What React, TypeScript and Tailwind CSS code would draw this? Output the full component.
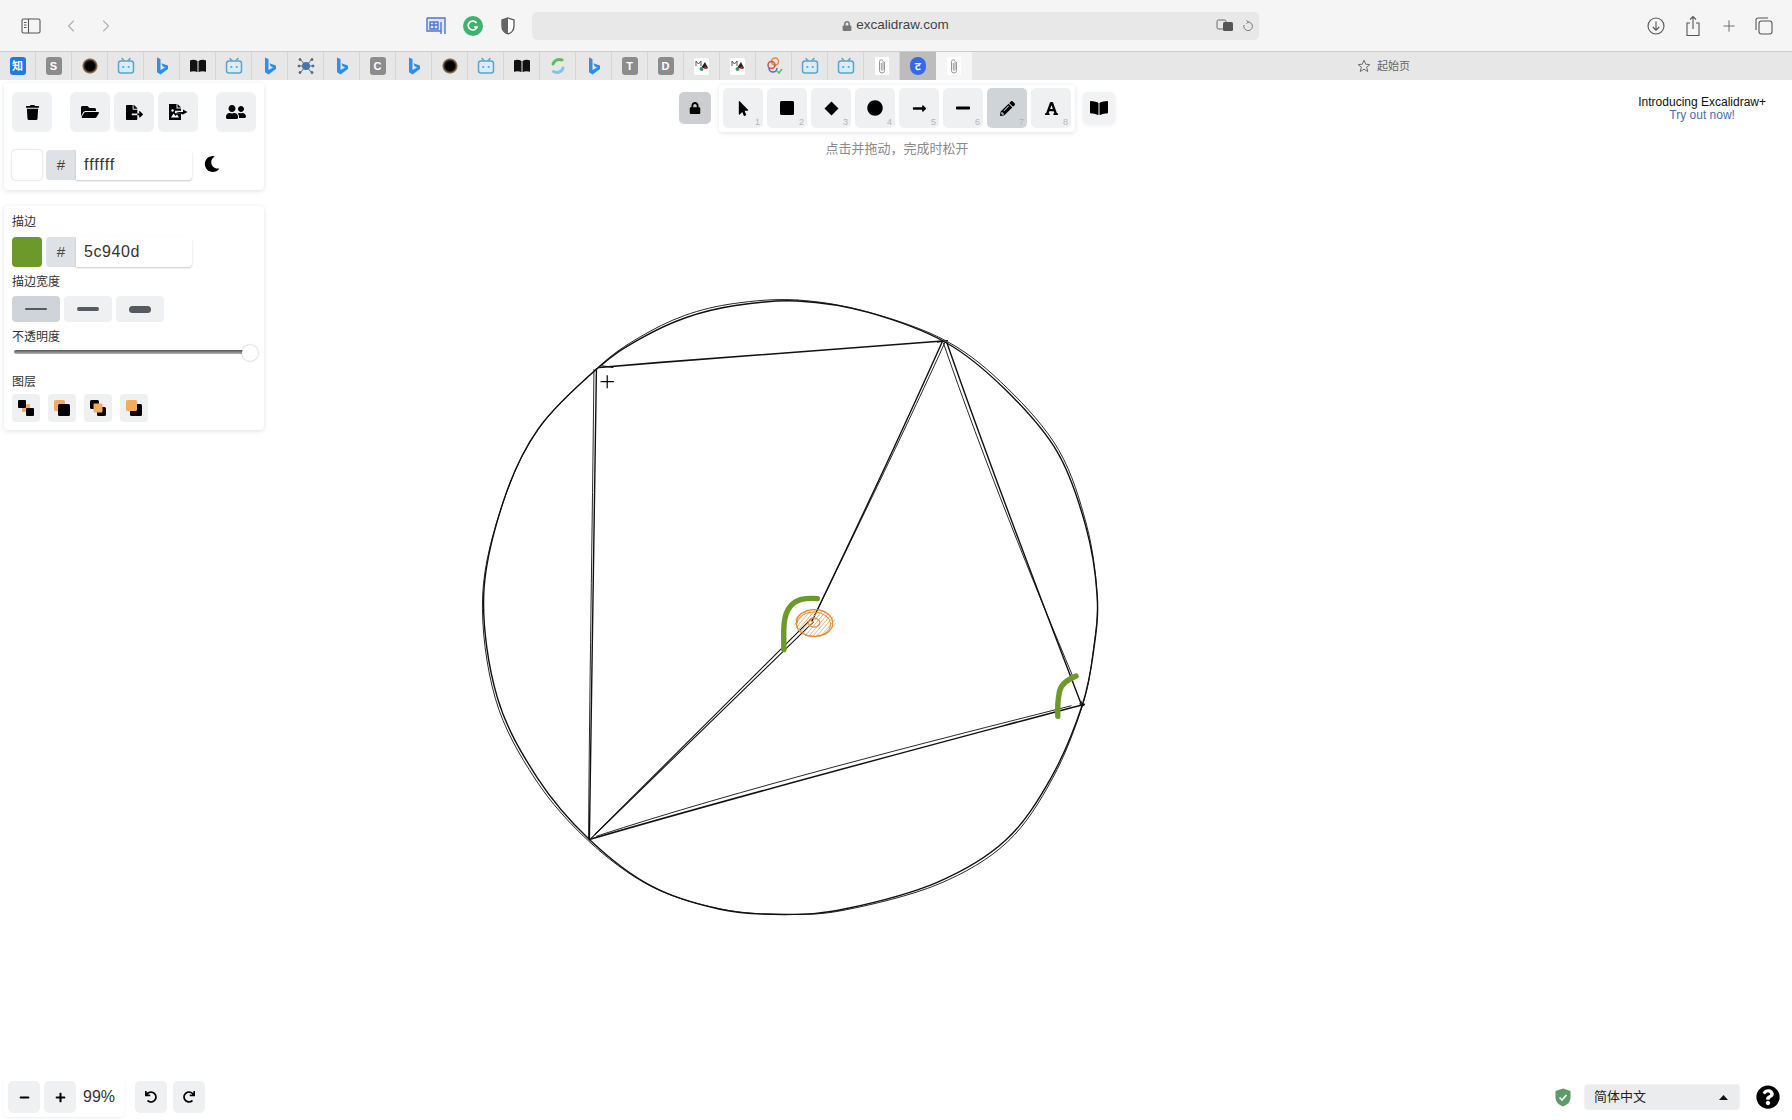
import React from "react";
import {
  FaTrash, FaFolderOpen, FaFileExport, FaUserFriends, FaMoon, FaLock, FaMousePointer, FaSquare, FaCircle,
  FaLongArrowAltRight, FaMinus, FaPencilAlt, FaFont, FaBookOpen, FaPlus, FaUndo, FaRedo, FaQuestionCircle,
} from "react-icons/fa";
import { ChevronLeft, ChevronRight, Plus } from "lucide-react";

type P = [number, number];
const smooth = (pts: P[]) => {
  const n = pts.length;
  let d = `M${pts[0][0]},${pts[0][1]}`;
  for (let i = 0; i < n; i++) {
    const p0 = pts[(i - 1 + n) % n], p1 = pts[i], p2 = pts[(i + 1) % n], p3 = pts[(i + 2) % n];
    d += `C${p1[0] + (p2[0] - p0[0]) / 6},${p1[1] + (p2[1] - p0[1]) / 6} ${p2[0] - (p3[0] - p1[0]) / 6},${p2[1] - (p3[1] - p1[1]) / 6} ${p2[0]},${p2[1]}`;
  }
  return d;
};
const circlePts: P[] = [
  [790, 27], [640, 38], [520, 68], [410, 120], [310, 190], [165, 340], [80, 520], [33, 750], [66, 1000], [162, 1196], [288, 1348],
  [437, 1462], [603, 1519], [760, 1532], [906, 1518], [1127, 1453], [1292, 1350], [1402, 1196], [1477, 1018], [1505, 880], [1513, 750],
  [1485, 578], [1416, 396], [1292, 245], [1150, 130], [961, 55],
];
const circle2 = circlePts.map((p, i): P => {
  const dx = p[0] - 770, dy = p[1] - 780, l = Math.hypot(dx, dy);
  const k = 1 + (3.5 * Math.sin(i * 0.9) + 2.5) / l;
  return [770 + dx * k, 780 + dy * k];
});
const Line = ({ d, w = 1 }: { d: string; w?: number }) => (
  <path d={d} fill="none" stroke="#111" strokeWidth={w} strokeLinecap="round" vectorEffect="non-scaling-stroke" />
);
const hatch = Array.from({ length: 16 }, (_, i) => {
  const t = -60 + i * 8;
  const c = 830 + t * 1.2, e = 817;
  return `M${c - 30},${e + 36}L${c + 30},${e - 36}`;
}).join("");

function Drawing() {
  return (
    <svg className="absolute left-[470px] top-[210px] w-[650px] h-[640px]" viewBox="0 0 1568 1570" preserveAspectRatio="none">
      <defs>
        <clipPath id="blob"><ellipse cx={832} cy={817} rx={50} ry={35} /></clipPath>
      </defs>
      <Line d={smooth(circlePts)} w={1.4} />
      <Line d={smooth(circle2)} w={0.9} />
      <Line d="M312,190C600,165 900,145 1140,125" w={1.6} />
      <Line d="M318,186L345,190M1128,128L1152,124" w={1.1} />
      <Line d="M305,193C300,600 292,1000 288,1348" w={1.4} />
      <Line d="M299,195C295,600 288,1000 286,1345" w={0.9} />
      <Line d="M302,1335L825,805" w={1.1} />
      <Line d="M292,1345L828,815" w={1.1} />
      <Line d="M825,812C930,590 1050,330 1140,125" w={1.4} />
      <Line d="M838,785C950,550 1060,320 1146,128" w={0.9} />
      <Line d="M1150,128C1250,420 1370,740 1476,1020" w={1.4} />
      <Line d="M1142,130C1240,420 1360,720 1455,950" w={0.9} />
      <Line d="M288,1348C650,1240 1100,1120 1482,1016" w={1.5} />
      <Line d="M305,1340C650,1225 1100,1110 1450,1020" w={0.9} />
      <path d="M1470,1015L1482,1020M1474,1008L1476,1024" stroke="#111" strokeWidth={1} vectorEffect="non-scaling-stroke" />
      <path d="M838,757C810,755 785,757 770,780C752,805 758,850 757,882" fill="none" stroke="#6e9a2b" strokeWidth={5.4} strokeLinecap="round" vectorEffect="non-scaling-stroke" />
      <path d="M1462,947C1445,955 1428,962 1422,985C1418,1005 1417,1025 1418,1046" fill="none" stroke="#6e9a2b" strokeWidth={5.4} strokeLinecap="round" vectorEffect="non-scaling-stroke" />
      <path d={hatch} clipPath="url(#blob)" fill="none" stroke="#f0a868" strokeWidth={0.9} vectorEffect="non-scaling-stroke" />
      <ellipse cx={831} cy={817} rx={44} ry={33} fill="none" stroke="#e58a38" strokeWidth={1.2} vectorEffect="non-scaling-stroke" />
      <ellipse cx={829} cy={820} rx={41} ry={30} fill="none" stroke="#e58a38" strokeWidth={1} vectorEffect="non-scaling-stroke" />
      <ellipse cx={830} cy={816} rx={14} ry={11} fill="none" stroke="#e58a38" strokeWidth={1.1} vectorEffect="non-scaling-stroke" />
      <path d="M315,225H347M331,209V241" stroke="#000" strokeWidth={1.2} vectorEffect="non-scaling-stroke" />
    </svg>
  );
}

const SidebarIcon = () => (
  <svg width="20" height="16" viewBox="0 0 20 16" fill="none" stroke="#555" strokeWidth="1.1">
    <rect x="1" y="1" width="18" height="14" rx="1.5" />
    <path d="M7.5 1V15" />
    <path d="M3 4.5H5.5M3 7H5.5M3 9.5H5.5" strokeWidth="1" />
  </svg>
);
const Bing = () => (
  <svg width="14" height="20" viewBox="0 0 14 20">
    <path d="M2 1.5L5.5 3V14L10 11.5L7.6 10.3L6.4 7.2L13 9.6V13L5.5 18.5L2 16.3Z" fill="#2f8fe8" />
  </svg>
);
const Bili = () => (
  <svg width="18" height="18" viewBox="0 0 18 18" fill="none">
    <path d="M5 1.5L7.2 4M13 1.5L10.8 4" stroke="#5aa5cf" strokeWidth="1.5" strokeLinecap="round" />
    <rect x="1.5" y="4" width="15" height="12" rx="2.5" fill="#d9edf7" stroke="#5aa5cf" strokeWidth="1.5" />
    <circle cx="6.3" cy="10" r="1.1" fill="#5aa5cf" />
    <circle cx="11.7" cy="10" r="1.1" fill="#5aa5cf" />
  </svg>
);
const Hole = () => (
  <div className="w-[16px] h-[16px] rounded-full bg-[radial-gradient(circle_closest-side,#000_55%,#33303c_72%,#b98650_92%,#e8e7e8_100%)]" />
);
const Book = () => (
  <svg width="18" height="14" viewBox="0 0 18 14">
    <path d="M1 1.5C3.5 .5 6 .7 8.5 2V13C6 12 3.5 12 1 12.7ZM17 1.5C14.5 .5 12 .7 9.5 2V13C12 12 14.5 12 17 12.7Z" fill="#111" />
  </svg>
);
const Letter = ({ c }: { c: string }) => (
  <div className="w-4 h-[18px] rounded-[3px] bg-[#8c8c8e] text-white text-[11px] font-bold flex items-center justify-center">{c}</div>
);
const Spider = () => (
  <svg width="18" height="18" viewBox="0 0 18 18" stroke="#5d6670" strokeWidth="1" fill="#5d6670">
    <path d="M9 9L3 2M9 9L15 2M9 9L1.5 9M9 9L16.5 9M9 9L3 16M9 9L15 16" />
    <circle cx="3" cy="2.5" r="1" /><circle cx="15" cy="2.5" r="1" /><circle cx="2" cy="9" r="1" />
    <circle cx="16" cy="9" r="1" /><circle cx="3" cy="15.5" r="1" /><circle cx="15" cy="15.5" r="1" />
    <circle cx="9" cy="9" r="4" fill="#3f76b8" stroke="none" />
  </svg>
);
const Swirl = () => (
  <svg width="16" height="18" viewBox="0 0 16 18" fill="none" strokeWidth="3" strokeLinecap="round">
    <path d="M3 7C4 3.5 8 1.5 12 3" stroke="#5bbf58" />
    <path d="M13 11C12 15 7 16.5 3.5 14.5" stroke="#7cc7e6" />
  </svg>
);
const Thumb = () => (
  <div className="w-[15px] h-[17px] bg-white rounded-[2px] flex items-center justify-center overflow-hidden">
    <svg width="14" height="12" viewBox="0 0 14 12">
      <path d="M1 1V6M1 1L3.5 4L6 1V6" stroke="#555" fill="none" strokeWidth="1" />
      <path d="M6 8L10 2L13 8Z" fill="#222" />
      <circle cx="6.5" cy="9" r="2" fill="#3f8f6e" />
      <path d="M10 6L13 9H9Z" fill="#b8413c" />
    </svg>
  </div>
);
const Colorful = () => (
  <svg width="18" height="20" viewBox="0 0 18 20" fill="none" strokeWidth="1.6">
    <circle cx="10" cy="5.5" r="3.5" stroke="#e98a3a" />
    <circle cx="6.5" cy="9" r="3.5" stroke="#d9534f" />
    <path d="M4 12A4 4 0 0 0 12 12" stroke="#4577c9" />
    <path d="M12 15L14 17L17 13" stroke="#5fbf5f" />
  </svg>
);
const Clip = () => (
  <div className="w-[14px] h-[18px] bg-white flex items-center justify-center">
    <svg width="8" height="17" viewBox="0 0 8 17" fill="none" stroke="#8a8a8a" strokeWidth="0.9">
      <path d="M6.5 4V12.5A2.5 2.5 0 0 1 1.5 12.5V3.5A1.7 1.7 0 0 1 5 3.5V11.5A.8 .8 0 0 1 3.3 11.5V5" />
    </svg>
  </div>
);
const BlueB = () => (
  <div className="w-4 h-[18px] rounded-[8px] bg-[#3568e8] text-white text-[11px] font-bold flex items-center justify-center">ट</div>
);
const Zhihu = () => (
  <div className="w-4 h-[18px] rounded-[3px] bg-[#1f7ae8] text-white text-[11px] font-bold flex items-center justify-center">知</div>
);

const tabs: React.ReactNode[] = [
  <Zhihu />, <Letter c="S" />, <Hole />, <Bili />, <Bing />, <Book />, <Bili />, <Bing />, <Spider />, <Bing />, <Letter c="C" />,
  <Bing />, <Hole />, <Bili />, <Book />, <Swirl />, <Bing />, <Letter c="T" />, <Letter c="D" />, <Thumb />, <Thumb />, <Colorful />,
  <Bili />, <Bili />, <Clip />, <BlueB />, <Clip />,
];

function BrowserChrome() {
  return (
    <div className="shrink-0">
      <div className="h-[52px] bg-[#f6f5f6] border-b border-[#cdcccd] flex items-center">
        <div className="ml-[21px]"><SidebarIcon /></div>
        <ChevronLeft className="ml-[20px]" size={20} strokeWidth={1.3} color="#b0b0b0" />
        <ChevronRight className="ml-[15px]" size={20} strokeWidth={1.3} color="#b0b0b0" />
        <svg className="ml-[310px]" width="20" height="18" viewBox="0 0 20 18" fill="none" stroke="#4f76cf" strokeWidth="1.4">
          <path d="M1 1H19V17M1 1V14H15" fill="#dfe7f7" />
          <path d="M4 5H12V12H4ZM4 8H12M8 5V12M15 5V17" />
        </svg>
        <div className="ml-[17px] w-[20px] h-[20px] rounded-full bg-[#3fb26f] flex items-center justify-center">
          <svg width="12" height="12" viewBox="0 0 12 12" fill="none" stroke="#fff" strokeWidth="1.7">
            <path d="M9.5 3A4.5 4.5 0 1 0 10 7H7" />
          </svg>
        </div>
        <svg className="ml-[18px]" width="14" height="18" viewBox="0 0 14 18">
          <path d="M7 1L13 3V9C13 13 10 16 7 17C4 16 1 13 1 9V3Z" fill="#fff" stroke="#555" strokeWidth="1.3" />
          <path d="M7 1L1 3V9C1 13 4 16 7 17Z" fill="#666" />
        </svg>
        <div className="ml-[17px] w-[727px] h-[28px] bg-[#e9e8e9] rounded-[5px] flex items-center relative">
          <div className="flex-1 flex items-center justify-center gap-[4px] text-[13.500px] text-[#444]">
            <FaLock size={10} color="#777" />
            <span>excalidraw.com</span>
          </div>
          <div className="absolute right-[6px] top-[7px] flex items-center gap-[8px]">
            <svg width="18" height="14" viewBox="0 0 18 14">
              <rect x="1" y="1" width="9" height="9" rx="1.5" fill="none" stroke="#666" strokeWidth="1" />
              <rect x="7" y="3" width="10" height="9" rx="1.5" fill="#555" />
            </svg>
            <svg width="11" height="12" viewBox="0 0 11 12" fill="none" stroke="#777" strokeWidth="1">
              <path d="M6 2A4.3 4.3 0 1 1 2 5" />
              <path d="M4.5 .5L6.5 2L4.5 3.5" />
            </svg>
          </div>
        </div>
        <svg className="ml-auto" width="18" height="18" viewBox="0 0 18 18" fill="none" stroke="#555" strokeWidth="1.1">
          <circle cx="9" cy="9" r="8" />
          <path d="M9 4.5V13M5.8 10L9 13.2L12.2 10" />
        </svg>
        <svg className="ml-[20px]" width="16" height="22" viewBox="0 0 16 22" fill="none" stroke="#555" strokeWidth="1.1">
          <path d="M5 8H2V20.5H14V8H11M8 14V1.5M5 4.5L8 1.5L11 4.5" />
        </svg>
        <Plus className="ml-[19px]" size={18} strokeWidth={1.1} color="#555" />
        <svg className="ml-[17px] mr-[19px]" width="18" height="18" viewBox="0 0 18 18" fill="none" stroke="#555" strokeWidth="1.1">
          <rect x="4" y="4" width="13" height="13" rx="2.500" />
          <path d="M1 13V3A2 2 0 0 1 3 1H13" />
        </svg>
      </div>
      <div className="h-[28px] bg-[#e8e7e8] flex">
        <div className="flex">
          {tabs.map((t, i) => (
            <div
              key={i}
              className={
                i === 25
                  ? "w-[36px] flex items-center justify-center bg-[#bdbcbd]"
                  : i === 26
                    ? "w-[36px] flex items-center justify-center bg-[#f6f5f6]"
                    : "w-[36px] flex items-center justify-center border-r border-[#d6d5d6]"
              }
            >
              {t}
            </div>
          ))}
        </div>
        <div className="flex-1 flex items-center pl-[385px] gap-[6px] text-[11px] text-[#666]">
          <svg width="14" height="14" viewBox="0 0 24 24" fill="none" stroke="#666" strokeWidth="1.6">
            <path d="M12 2L15 9L22 9.500L16.500 14L18.500 21.500L12 17.500L5.500 21.500L7.500 14L2 9.500L9 9Z" />
          </svg>
          <span>起始页</span>
        </div>
      </div>
    </div>
  );
}

const IconBtn = ({ children, extra = "" }: { children: React.ReactNode; extra?: string }) => (
  <div className={"w-10 h-10 rounded-[6px] bg-[#eff0f1] flex items-center justify-center text-black " + extra}>{children}</div>
);
const ImageExport = () => (
  <svg width="19" height="16" viewBox="0 0 19 16">
    <path d="M0 0H7.500V4.500H12V6.800H6V9.200H12V16H0Z" fill="#000" />
    <path d="M8.500 0L12 3.500H8.500Z" fill="#000" />
    <path d="M2 13.500L4.500 9.500L6.500 12L8 10.500L10 13.500Z" fill="#fff" />
    <circle cx="3.500" cy="6.500" r="1.200" fill="#fff" />
    <path d="M7 8H14V5.500L18.500 8L14 10.500Z" fill="#000" />
  </svg>
);
const Label = ({ children }: { children: React.ReactNode }) => (
  <div className="text-[12px] leading-[16px] text-[#333]">{children}</div>
);
const ColorRow = ({ swatch, value, big }: { swatch: string; value: string; big?: boolean }) => (
  <div className="flex items-center h-[30px]">
    <div className={"w-[30px] h-[30px] rounded-[4px] " + swatch} />
    <div className="ml-[4px] w-[30px] h-[30px] bg-[#dee2e6] rounded-l-[4px] flex items-center justify-center text-[15px] text-[#444]">#</div>
    <div className={"w-[116px] h-[30px] rounded-r-[4px] bg-white shadow-[0_1px_2px_rgba(0,0,0,0.22)] pl-[8px] flex items-center text-[16px] text-[#333] " + (big ? "tracking-[0.6px]" : "tracking-[1px]")}>{value}</div>
  </div>
);
const Stroke = ({ h, active }: { h: string; active?: boolean }) => (
  <div className={"w-12 h-[26px] rounded-[4px] flex items-center justify-center " + (active ? "bg-[#ced4da]" : "bg-[#eff0f1]")}>
    <div className={"w-[22px] rounded-full bg-[#555a60] " + h} />
  </div>
);
const O = "#f4ab5d";
const layers = [
  <svg width="16" height="16" viewBox="0 0 16 16"><rect x="4" y="4" width="8" height="8" fill={O} /><rect x="0" y="0" width="8" height="8" rx="1" fill="#000" /><rect x="8" y="8" width="8" height="8" rx="1" fill="#000" /></svg>,
  <svg width="16" height="16" viewBox="0 0 16 16"><rect x="0" y="0" width="11" height="11" rx="1.500" fill={O} /><rect x="4" y="4" width="12" height="12" rx="1.500" fill="#000" /></svg>,
  <svg width="16" height="16" viewBox="0 0 16 16"><rect x="0" y="0" width="9" height="9" rx="1.500" fill="#000" /><rect x="7" y="7" width="9" height="9" rx="1.500" fill="#000" /><rect x="3.500" y="3.500" width="9" height="9" rx="1" fill={O} /></svg>,
  <svg width="16" height="16" viewBox="0 0 16 16"><rect x="4" y="4" width="12" height="12" rx="1.500" fill="#000" /><rect x="0" y="0" width="11" height="11" rx="1.500" fill={O} /></svg>,
];

function LeftPanels() {
  const panel = "w-[260px] rounded-[4px] bg-white shadow-[0_1px_5px_rgba(0,0,0,0.12)]";
  return (
    <div className="w-[260px] flex flex-col gap-4">
      <div className={panel + " h-[107px] pl-[8px] pt-[9px]"}>
        <div className="flex">
          <IconBtn><FaTrash size={15} /></IconBtn>
          <IconBtn extra="ml-[18px]"><FaFolderOpen size={18} /></IconBtn>
          <IconBtn extra="ml-[4px]"><FaFileExport size={17} /></IconBtn>
          <IconBtn extra="ml-[4px]"><ImageExport /></IconBtn>
          <IconBtn extra="ml-[18px]"><FaUserFriends size={20} /></IconBtn>
        </div>
        <div className="flex items-center mt-[18px]">
          <ColorRow swatch="bg-white shadow-[0_0_2px_rgba(0,0,0,0.3)]" value="ffffff" />
          <FaMoon className="ml-[12px] -mt-[2px]" size={16} color="#000" />
        </div>
      </div>
      <div className={panel + " h-[224px] pl-[8px] pt-[8px]"}>
        <Label>描边</Label>
        <div className="mt-[7px]"><ColorRow swatch="bg-[#6b9a2a]" value="5c940d" big /></div>
        <div className="mt-[7px]"><Label>描边宽度</Label></div>
        <div className="flex gap-1 mt-[6px]">
          <Stroke h="h-[2px]" active />
          <Stroke h="h-[4px]" />
          <Stroke h="h-[7px]" />
        </div>
        <div className="mt-[7px]"><Label>不透明度</Label></div>
        <div className="relative h-[18px] -mt-[2px] w-[248px] flex items-center">
          <div className="ml-[2px] w-[230px] h-[4px] rounded-[2px] bg-gradient-to-b from-[#555] to-[#b5b5b5]" />
          <div className="absolute left-[230px] top-[2px] w-4 h-4 rounded-full bg-white shadow-[0_0_2px_rgba(0,0,0,0.35)]" />
        </div>
        <div className="mt-[13px]"><Label>图层</Label></div>
        <div className="flex gap-2 mt-[4px]">
          {layers.map((l, i) => (
            <div key={i} className="w-7 h-7 rounded-[4px] bg-[#eff0f1] flex items-center justify-center">{l}</div>
          ))}
        </div>
      </div>
    </div>
  );
}

const tools: { icon: React.ReactNode; active?: boolean }[] = [
  { icon: <FaMousePointer size={15} /> },
  { icon: <FaSquare size={16} /> },
  { icon: <svg width="15" height="15" viewBox="0 0 15 15"><path d="M7.500 .500L14.500 7.500L7.500 14.500L.500 7.500Z" fill="#000" /></svg> },
  { icon: <FaCircle size={16} /> },
  { icon: <FaLongArrowAltRight size={15} /> },
  { icon: <FaMinus size={16} /> },
  { icon: <FaPencilAlt size={15} />, active: true },
  { icon: <FaFont size={15} /> },
];

function Toolbar() {
  return (
    <div className="ml-[415px] flex items-start gap-2 pt-[2px]">
      <div className="mt-[7px] w-8 h-8 rounded-[5px] bg-[#ccced1] flex items-center justify-center"><FaLock size={12} color="#000" /></div>
      <div className="flex flex-col items-center">
        <div className="w-[356px] h-[47px] rounded-[4px] bg-white shadow-[0_1px_5px_rgba(0,0,0,0.12)] flex items-start gap-1 pl-[4px] pt-[3px]">
          {tools.map((t, i) => (
            <div key={i} className={"relative w-10 h-10 rounded-[5px] flex items-center justify-center text-black " + (t.active ? "bg-[#ced4d7]" : "bg-[#eff0f1]")}>
              {t.icon}
              <span className="absolute right-[3px] bottom-[1px] text-[9px] leading-[10px] text-[#b4b4b4]">{i + 1}</span>
            </div>
          ))}
        </div>
        <div className="mt-[9px] text-[13px] leading-4 text-[#8a8a8a]">点击并拖动，完成时松开</div>
      </div>
      <div className="mt-[7px] w-8 h-8 rounded-[5px] bg-[#f1f2f3] shadow-[0_1px_4px_rgba(0,0,0,0.08)] flex items-center justify-center"><FaBookOpen size={18} color="#000" /></div>
    </div>
  );
}

function BottomBar() {
  const b = "w-8 h-8 rounded-[5px] bg-[#eff0f1] flex items-center justify-center text-black";
  return (
    <div className="flex items-center pl-[4px] pb-[3px]">
      <div className="w-[120px] h-[40px] rounded-[4px] bg-white shadow-[0_1px_3px_rgba(0,0,0,0.07)] flex items-center pl-[4px] gap-1">
        <div className={b}><FaMinus size={11} /></div>
        <div className={b}><FaPlus size={11} /></div>
        <span className="ml-[3px] text-[16px] text-[#333]">99%</span>
      </div>
      <div className="ml-[11px] flex gap-[6px]">
        <div className={b}><FaUndo size={12} /></div>
        <div className={b}><FaRedo size={12} /></div>
      </div>
      <svg className="ml-auto" width="16" height="19" viewBox="0 0 16 19">
        <path d="M8 .500L15.500 3V9.500C15.500 14 12 17 8 18.500C4 17 .500 14 .500 9.500V3Z" fill="#5d9a67" />
        <path d="M4.500 9.500L7 12L11.500 7" stroke="#fff" strokeWidth="1.600" fill="none" />
      </svg>
      <div className="ml-[14px] w-[154px] h-[24px] rounded-[3px] bg-[#ebecee] shadow-[0_0_2px_rgba(0,0,0,0.2)] flex items-center pl-[9px] text-[13px] text-[#222]">
        <span>简体中文</span>
        <svg className="ml-auto mr-[11px]" width="9" height="5" viewBox="0 0 9 5"><path d="M0 5L4.500 0L9 5Z" fill="#111" /></svg>
      </div>
      <FaQuestionCircle className="ml-[17px] mr-[12px]" size={24} color="#000" />
    </div>
  );
}

export default function App() {
  return (
    <div className="w-[1792px] h-[1120px] overflow-hidden bg-white flex flex-col [font-family:'Liberation_Sans','Noto_Sans_CJK_SC',sans-serif]">
      <BrowserChrome />
      <div className="relative flex-1 flex flex-col justify-between">
        <Drawing />
        <div className="relative flex items-start pl-[4px] pt-[3px]">
          <LeftPanels />
          <Toolbar />
          <div className="ml-auto mr-[26px] mt-[13px] text-center text-[12px] leading-[13px] text-[#111]">
            <div>Introducing Excalidraw+</div>
            <div className="text-[#4a6db0]">Try out now!</div>
          </div>
        </div>
        <div className="relative"><BottomBar /></div>
      </div>
    </div>
  );
}
